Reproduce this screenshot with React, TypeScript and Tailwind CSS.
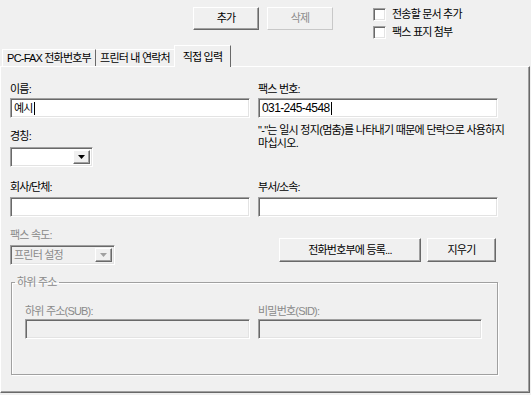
const sunken =
  "border border-t-[#a0a0a0] border-l-[#a0a0a0] border-b-white border-r-white shadow-[inset_1px_1px_0_#696969,inset_-1px_-1px_0_#e3e3e3]";
const raised =
  "border border-t-white border-l-white border-b-[#696969] border-r-[#696969] shadow-[inset_-1px_-1px_0_#a0a0a0]";

function Caret() {
  return <span className="inline-block w-px h-[13px] bg-black align-middle ml-[1px]"></span>;
}

function Arrow({ color }: { color: string }) {
  return (
    <svg width="7" height="4" viewBox="0 0 7 4">
      <polygon points="0,0 7,0 3.5,4" fill={color} />
    </svg>
  );
}

function TextBox({ value, caret, className = "", disabled = false }: { value?: string; caret?: boolean; className?: string; disabled?: boolean }) {
  return (
    <div className={`${sunken} h-[20px] ${disabled ? "bg-[#f0f0f0]" : "bg-white"} flex items-center pl-[3px] ${className}`}>
      {value}
      {caret && <Caret />}
    </div>
  );
}

function Combo({ value, disabled = false, width }: { value?: string; disabled?: boolean; width: string }) {
  return (
    <div className={`${sunken} ${width} h-[20px] ${disabled ? "bg-[#f0f0f0] text-[#8a8a8a]" : "bg-white"} flex items-center p-[2px]`}>
      <div className="flex-1 pl-[1px]">{value}</div>
      <div className={`${raised} bg-[#f0f0f0] w-[17px] h-full flex items-center justify-center`}>
        <Arrow color={disabled ? "#a0a0a0" : "#000"} />
      </div>
    </div>
  );
}

function Label({ children, disabled = false, className = "" }: { children: React.ReactNode; disabled?: boolean; className?: string }) {
  return <div className={`h-[13px] leading-[13px] ${disabled ? "text-[#8a8a8a]" : ""} ${className}`}>{children}</div>;
}

function CheckRow({ label }: { label: string }) {
  return (
    <div className="flex items-center gap-[6px] h-[13px]">
      <div className={`${sunken} w-[13px] h-[13px] bg-white`}></div>
      <span>{label}</span>
    </div>
  );
}

export default function App() {
  return (
    <div className="w-[531px] h-[395px] bg-[#f0f0f0] overflow-hidden text-[11px] tracking-[-0.8px] text-black font-['Liberation_Sans','Noto_Sans_CJK_KR',sans-serif]">
      <div className="h-[45px] flex pl-[193px] pt-[7px]">
        <button className={`${raised} w-[66px] h-[23px] bg-[#f0f0f0]`}>추가</button>
        <button className="ml-[8px] w-[66px] h-[23px] bg-[#f0f0f0] border border-t-white border-l-white border-b-[#c8c8c8] border-r-[#c8c8c8] text-[#8a8a8a]">
          삭제
        </button>
        <div className="ml-[40px] mt-[1px] flex flex-col gap-[5px]">
          <CheckRow label="전송할 문서 추가" />
          <CheckRow label="팩스 표지 첨부" />
        </div>
      </div>

      <div className="h-[21px] flex items-end pl-[2px] relative z-10">
        <div className="w-[94px] h-[17px] border-t border-l border-white border-r border-r-[#696969] flex items-center justify-center">
          PC-FAX 전화번호부
        </div>
        <div className="w-[79px] h-[17px] border-t border-white border-r border-r-[#696969] flex items-center justify-center">
          프린터 내 연락처
        </div>
        <div className="-ml-[1px] w-[57px] h-[22px] -mb-[1px] bg-[#f0f0f0] border-t border-l border-white border-r border-r-[#696969] flex items-start justify-center pt-[3px]">
          직접 입력
        </div>
      </div>

      <div className="w-[530px] h-[327px] border-t border-l border-white border-r border-b border-r-[#696969] border-b-[#696969] shadow-[inset_-1px_-1px_0_#a0a0a0] pl-[9px] pt-[16px]">
        <div className="grid grid-cols-[240px_240px] gap-x-[8px]">
          <div>
            <Label>이름:</Label>
            <TextBox value="예시" caret className="mt-[2px]" />
          </div>
          <div>
            <Label>팩스 번호:</Label>
            <TextBox value="031-245-4548" caret className="mt-[2px] text-[12px] tracking-[-0.6px]" />
          </div>

          <div className="pt-[12px]">
            <Label>경칭:</Label>
            <div className="mt-[4px]">
              <Combo width="w-[83px]" />
            </div>
          </div>
          <div className="pt-[6px] leading-[13px] tracking-[-0.7px] whitespace-nowrap">
            "-"는 일시 정지(멈춤)를 나타내기 때문에 단락으로 사용하지
            <br />
            마십시오.
          </div>

          <div className="pt-[14px]">
            <Label>회사/단체:</Label>
            <TextBox className="mt-[3px]" />
          </div>
          <div className="pt-[14px]">
            <Label>부서/소속:</Label>
            <TextBox className="mt-[3px]" />
          </div>

          <div className="pt-[12px]">
            <Label disabled>팩스 속도:</Label>
            <div className="mt-[3px]">
              <Combo width="w-[105px]" value="프린터 설정" disabled />
            </div>
          </div>
          <div className="pt-[21px] pl-[21px] flex gap-[6px]">
            <button className={`${raised} w-[142px] h-[24px] bg-[#f0f0f0]`}>전화번호부에 등록...</button>
            <button className={`${raised} w-[69px] h-[24px] bg-[#f0f0f0]`}>지우기</button>
          </div>
        </div>

        <fieldset className="mt-[11px] ml-[1px] w-[487px] h-[99px] border border-[#a0a0a0] shadow-[inset_1px_1px_0_#fff,1px_1px_0_#fff] p-0">
          <legend className="ml-[3px] px-[2px] leading-[13px] text-[#8a8a8a]">하위 주소</legend>
          <div className="mt-[16px] pl-[13px] grid grid-cols-[225px_224px] gap-x-[8px]">
            <div>
              <Label disabled>하위 주소(SUB):</Label>
              <TextBox disabled className="mt-[1px]" />
            </div>
            <div>
              <Label disabled>비밀번호(SID):</Label>
              <TextBox disabled className="mt-[1px]" />
            </div>
          </div>
        </fieldset>
      </div>
    </div>
  );
}
